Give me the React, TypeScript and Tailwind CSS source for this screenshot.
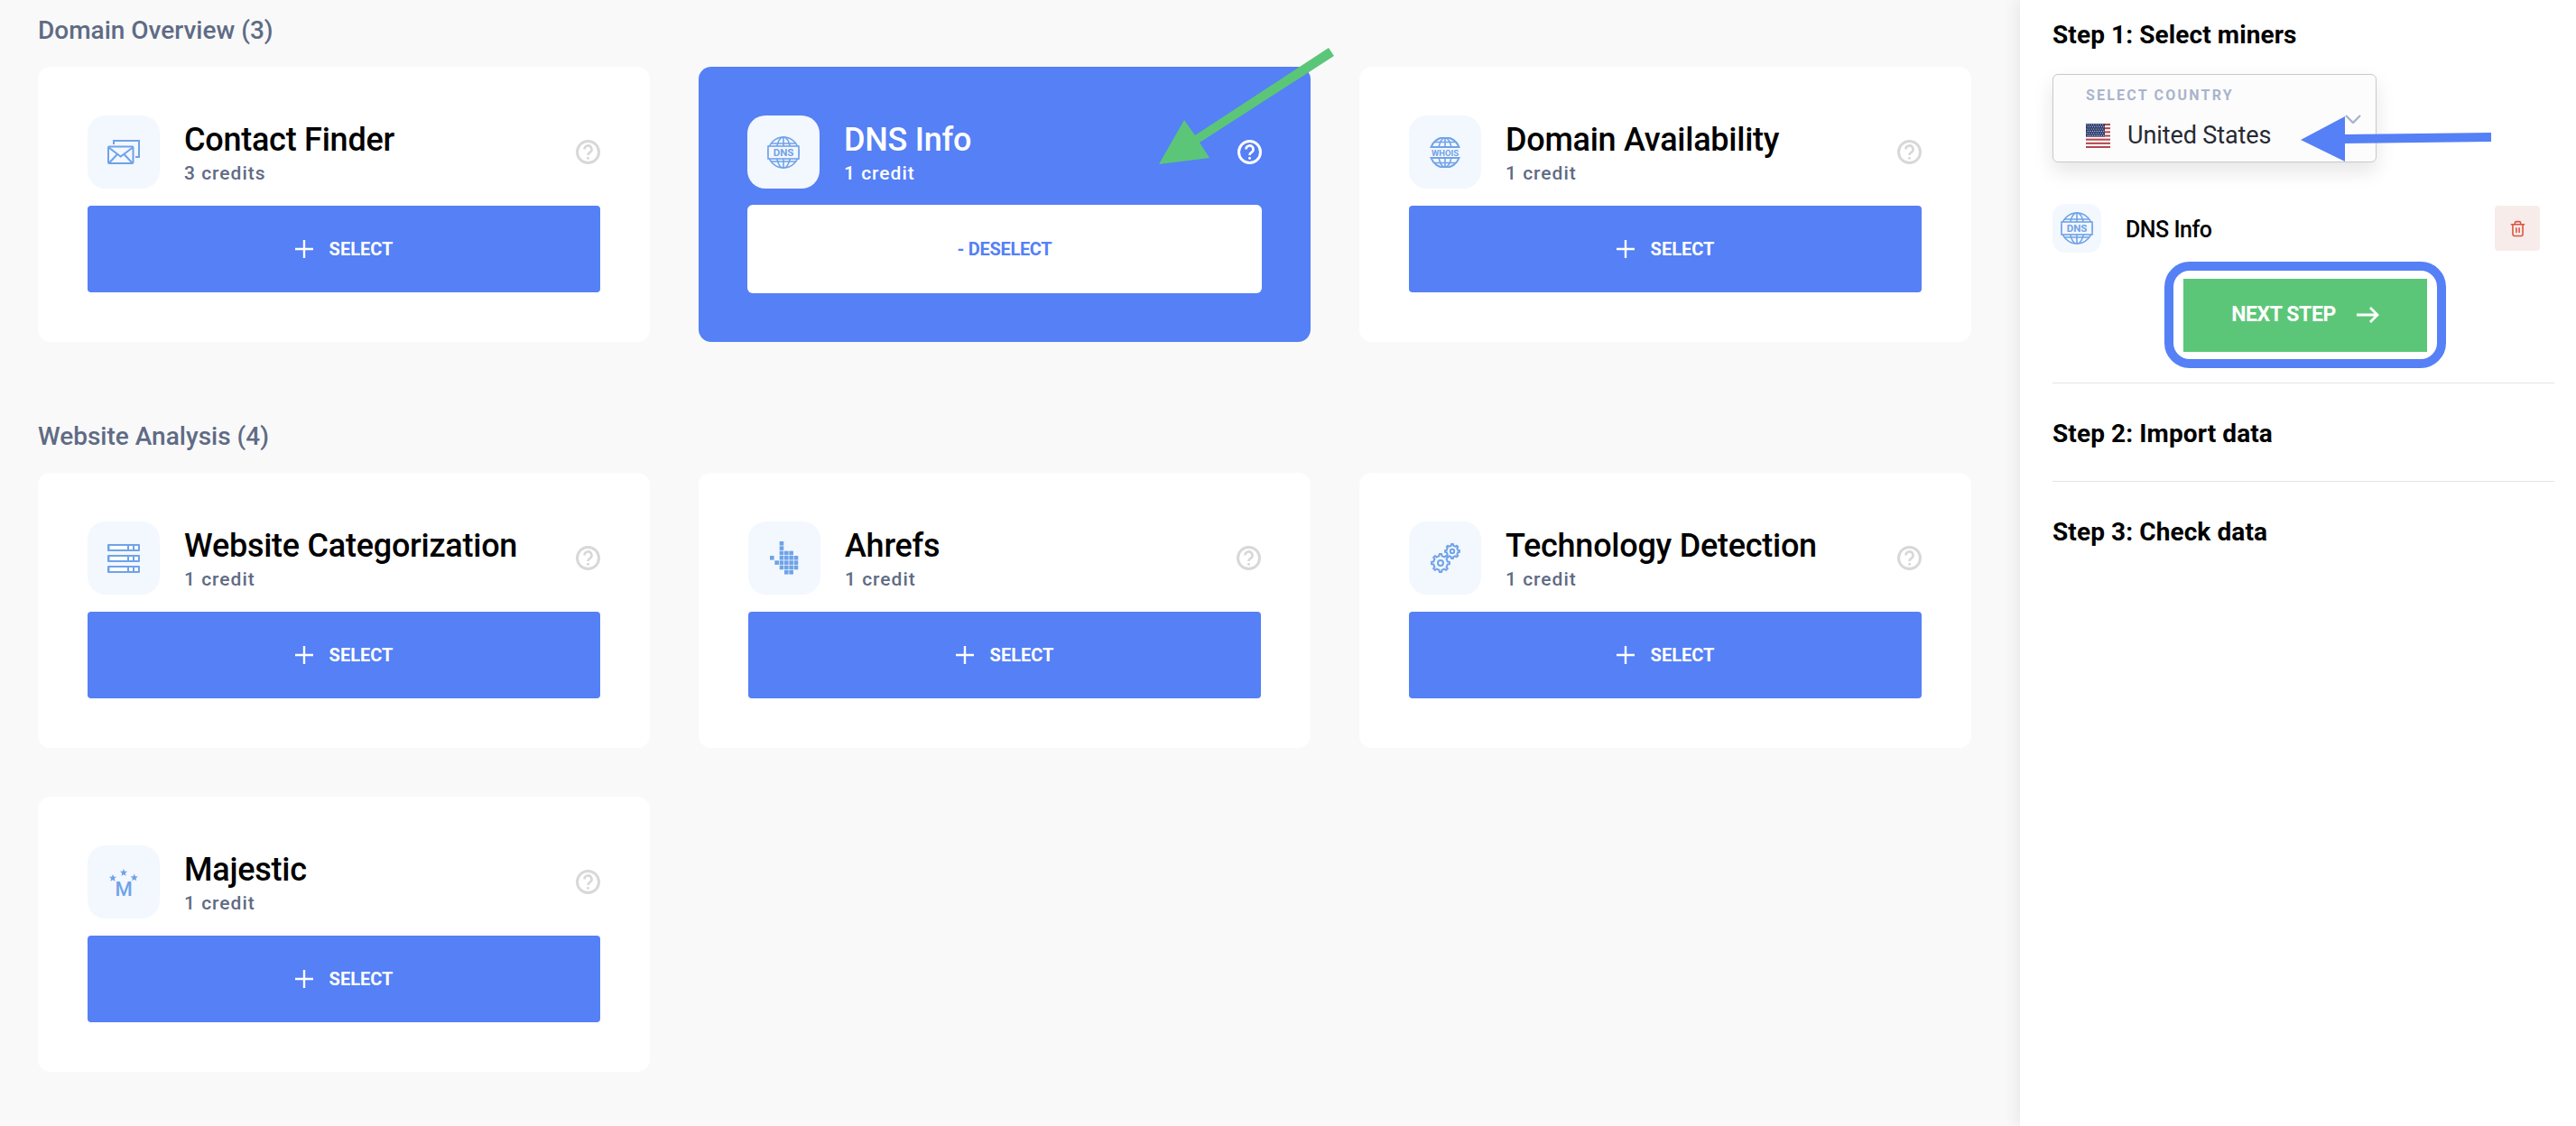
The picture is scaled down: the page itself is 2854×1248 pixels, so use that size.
import type { ReactNode } from 'react'
import { Trash2 } from 'lucide-react'

const ICON = '#6fa3e8'

function gearPath(cx: number, cy: number, r: number, teeth: number) {
  const pts: string[] = []
  const step = (Math.PI * 2) / teeth
  for (let i = 0; i < teeth; i++) {
    const a = i * step
    const list: [number, number][] = [
      [r * 0.78, a - step * 0.5],
      [r * 0.78, a - step * 0.26],
      [r, a - step * 0.16],
      [r, a + step * 0.16],
      [r * 0.78, a + step * 0.26],
    ]
    list.forEach(([rad, ang]) => {
      pts.push(`${(cx + rad * Math.cos(ang)).toFixed(2)},${(cy + rad * Math.sin(ang)).toFixed(2)}`)
    })
  }
  return `M${pts.join('L')}Z`
}

function starPoints(cx: number, cy: number, r: number) {
  const pts: string[] = []
  for (let i = 0; i < 10; i++) {
    const a = -Math.PI / 2 + (i * Math.PI) / 5
    const rad = i % 2 === 0 ? r : r * 0.45
    pts.push(`${(cx + rad * Math.cos(a)).toFixed(2)},${(cy + rad * Math.sin(a)).toFixed(2)}`)
  }
  return pts.join(' ')
}

function MailIcon() {
  return (
    <svg width="36" height="27" viewBox="0 0 36 27" fill="none" stroke={ICON} strokeWidth="2">
      <path d="M7 5V1h28v18h-4" />
      <rect x="1" y="7.5" width="27.5" height="18.5" rx="1" />
      <path d="M1.5 8.5l13.2 10 13.3-10M2 25.5l9-9.5M27.5 25.5l-9-9.5" />
    </svg>
  )
}

function DnsGlobe() {
  return (
    <svg width="36" height="36" viewBox="0 0 36 36" fill="none" stroke={ICON} strokeWidth="1.6">
      <circle cx="18" cy="18" r="17" />
      <ellipse cx="18" cy="18" rx="8" ry="17" />
      <path d="M18 1v34M4 8h28M4 28h28" />
      <rect x="1" y="11" width="34" height="14" fill="#f3f7fe" />
      <text x="18" y="22.2" textAnchor="middle" fontSize="11.5" fontWeight="700" fontFamily="Roboto, sans-serif" fill={ICON} stroke="none">DNS</text>
    </svg>
  )
}

function WhoisGlobe() {
  return (
    <svg width="34" height="34" viewBox="0 0 34 34" fill="none" stroke={ICON} strokeWidth="2">
      <path d="M1.5 11A16.5 16.5 0 0 1 32.5 11H1.5ZM1.5 23A16.5 16.5 0 0 0 32.5 23H1.5Z" />
      <ellipse cx="17" cy="17" rx="7.5" ry="16" strokeWidth="1.6" />
      <path d="M17 1v32M5 5.500h24M5 28.500h24" strokeWidth="1.6" />
      <rect x="0" y="12" width="34" height="10" fill="#f3f7fe" stroke="none" />
      <text x="17" y="21" textAnchor="middle" fontSize="9.500" fontWeight="700" fontFamily="Roboto, sans-serif" fill={ICON} stroke="none">WHOIS</text>
    </svg>
  )
}

function ServerIcon() {
  return (
    <svg width="36" height="32" viewBox="0 0 36 32" fill={ICON}>
      {[0, 12, 24].map((y) => (
        <g key={y}>
          <rect x="0" y={y} width="36" height="8" rx="1" />
          <rect x="2.500" y={y + 2} width="19.500" height="4" fill="#fff" />
          <rect x="24" y={y + 2} width="4" height="4" fill="#fff" />
          <rect x="30" y={y + 2} width="4" height="4" fill="#fff" />
        </g>
      ))}
    </svg>
  )
}

function AhrefsIcon() {
  const cells: [number, number][] = [
    [2, 0], [2, 1], [2, 2], [3, 2], [4, 2],
    [0, 3], [2, 3], [3, 3], [4, 3], [5, 3],
    [1, 4], [2, 4], [3, 4], [4, 4], [5, 4],
    [2, 5], [3, 5], [4, 5], [5, 5], [3, 6], [4, 6],
  ]
  return (
    <svg width="32" height="38" viewBox="0 0 32 38" fill={ICON}>
      {cells.map(([c, r]) => (
        <rect key={`${c}-${r}`} x={c * 5.33} y={r * 5.33} width="4.600" height="4.600" />
      ))}
    </svg>
  )
}

function GearsIcon() {
  return (
    <svg width="33" height="33" viewBox="0 0 33 33" fill="none" stroke={ICON} strokeWidth="2">
      <path d={gearPath(11, 22, 10, 8)} strokeLinejoin="round" />
      <circle cx="11" cy="22" r="3" />
      <path d={gearPath(24, 9, 8, 8)} strokeLinejoin="round" />
      <circle cx="24" cy="9" r="2.200" />
    </svg>
  )
}

function MajesticIcon() {
  return (
    <svg width="36" height="36" viewBox="0 0 36 36" fill={ICON}>
      <polygon points={starPoints(6, 13.2, 4.3)} />
      <polygon points={starPoints(18, 7.2, 4.3)} />
      <polygon points={starPoints(29.7, 12.8, 4.3)} />
      <text x="18" y="32.500" textAnchor="middle" fontSize="22" fontWeight="500" fontFamily="Roboto, sans-serif">M</text>
    </svg>
  )
}

function HelpIcon({ color }: { color: string }) {
  return (
    <svg width="27" height="27" viewBox="0 0 27 27" fill="none" stroke={color} strokeWidth="3" className="shrink-0">
      <circle cx="13.500" cy="13.500" r="12" />
      <path d="M9.500 10.500a4 4 0 1 1 6 3.400c-1.400.8-2 1.500-2 3.100" strokeWidth="2.600" />
      <circle cx="13.500" cy="20.300" r="1.500" fill={color} stroke="none" />
    </svg>
  )
}

function UsFlag() {
  const stripes = [0, 1, 2, 3, 4, 5, 6]
  const dots: [number, number][] = []
  for (let r = 0; r < 6; r++) {
    for (let c = 0; c < 8; c++) dots.push([1.2 + c * 2.5 + (r % 2) * 1.1, 1.2 + r * 2.4])
  }
  return (
    <svg width="27" height="27" viewBox="0 0 27 27" className="shrink-0">
      <rect width="27" height="27" fill="#fff" />
      {stripes.map((i) => (
        <rect key={i} x="0" y={i * 4.16} width="27" height="2.080" fill="#b5474f" />
      ))}
      <rect width="21" height="14.500" fill="#2c3a6b" />
      {dots.map(([x, y]) => (
        <circle key={`${x}-${y}`} cx={x} cy={y} r="0.600" fill="#e8ecf5" />
      ))}
    </svg>
  )
}

type Miner = { name: string; credits: string; icon: ReactNode; selected?: boolean }

const domainMiners: Miner[] = [
  { name: 'Contact Finder', credits: '3 credits', icon: <MailIcon /> },
  { name: 'DNS Info', credits: '1 credit', icon: <DnsGlobe />, selected: true },
  { name: 'Domain Availability', credits: '1 credit', icon: <WhoisGlobe /> },
]

const websiteMiners: Miner[] = [
  { name: 'Website Categorization', credits: '1 credit', icon: <ServerIcon /> },
  { name: 'Ahrefs', credits: '1 credit', icon: <AhrefsIcon /> },
  { name: 'Technology Detection', credits: '1 credit', icon: <GearsIcon /> },
  { name: 'Majestic', credits: '1 credit', icon: <MajesticIcon /> },
]

function MinerCard({ miner }: { miner: Miner }) {
  const { selected } = miner
  return (
    <div className={`h-[305px] rounded-[14px] pt-[54px] ${selected ? 'bg-[#5580f6] px-[54px]' : 'bg-white px-[55px]'}`}>
      <div className="flex h-[81px] items-center">
        <div className="flex h-[81px] w-[80px] shrink-0 items-center justify-center rounded-[20px] bg-[#f3f7fe]">
          {miner.icon}
        </div>
        <div className="ml-[27px] flex-1">
          <div className={`mt-[3px] text-[36px] leading-[36px] font-medium tracking-[-0.25px] ${selected ? 'text-white' : 'text-black'}`}>
            {miner.name}
          </div>
          <div className={`mt-[7px] text-[21px] leading-[24px] font-medium tracking-[1px] ${selected ? 'text-white' : 'text-[#5f6b85]'}`}>
            {miner.credits}
          </div>
        </div>
        <HelpIcon color={selected ? '#ffffff' : '#d8d8d8'} />
      </div>
      {selected ? (
        <button className="mt-[18px] flex h-[98px] w-full items-center justify-center rounded-[6px] bg-white text-[20px] font-bold tracking-[-0.3px] text-[#5580f6]">
          - DESELECT
        </button>
      ) : (
        <button className="mt-[19px] flex h-[96px] w-full items-center justify-center rounded-[4px] bg-[#5580f6] text-[20px] font-bold text-white">
          <svg width="20" height="20" viewBox="0 0 20 20" stroke="#fff" strokeWidth="2.400" className="mr-[18px]">
            <path d="M10 0v20M0 10h20" />
          </svg>
          SELECT
        </button>
      )}
    </div>
  )
}

function StepTitle({ children }: { children: ReactNode }) {
  return <div className="text-[28px] leading-[36px] font-bold tracking-[0.1px] text-black">{children}</div>
}

export default function App() {
  return (
    <div className="relative flex h-[1248px] w-[2854px] overflow-hidden bg-[#f9f9f9] font-['Roboto',sans-serif]">
      {/* Miners */}
      <main className="flex-1 pt-[18px] pl-[42px]">
        <h2 className="mb-[24px] text-[28px] leading-[32px] font-medium text-[#5f6b85]">Domain Overview (3)</h2>
        <div className="grid w-[2142px] grid-cols-3 gap-[54px]">
          {domainMiners.map((m) => (
            <MinerCard key={m.name} miner={m} />
          ))}
        </div>
        <h2 className="mt-[89px] mb-[24px] text-[28px] leading-[32px] font-medium text-[#5f6b85]">Website Analysis (4)</h2>
        <div className="grid w-[2142px] grid-cols-3 gap-[54px]">
          {websiteMiners.map((m) => (
            <MinerCard key={m.name} miner={m} />
          ))}
        </div>
      </main>

      {/* Steps sidebar */}
      <aside className="w-[616px] shrink-0 bg-white pt-[21px] pr-[24px] pl-[36px] shadow-[-6px_0_14px_rgba(0,0,0,0.06)]">
        <StepTitle>Step 1: Select miners</StepTitle>

        <div className="mt-[25px] h-[98px] w-[359px] rounded-[6px] border border-[#c9c9c9] bg-[#fcfcfc] pt-[13px] pl-[36px] shadow-[0_10px_22px_rgba(0,0,0,0.1)]">
          <div className="text-[16px] leading-[20px] font-bold tracking-[2.2px] text-[#a9b4cc]">SELECT COUNTRY</div>
          <div className="mt-[18px] flex items-center">
            <UsFlag />
            <span className="ml-[19px] text-[27px] leading-[32px] tracking-[-0.1px] text-[#272a33]">United States</span>
            <svg width="18" height="10" viewBox="0 0 18 10" fill="none" stroke="#a9b4cc" strokeWidth="2.400" className="mt-[-37px] ml-[82px]">
              <path d="M1 1l8 8 8-8" />
            </svg>
          </div>
        </div>

        <div className="mt-[46px] flex h-[54px] items-center pr-[16px]">
          <div className="flex h-[54px] w-[54px] items-center justify-center rounded-[14px] bg-[#f3f7fe]">
            <DnsGlobe />
          </div>
          <span className="ml-[27px] flex-1 pt-[3px] text-[25px] font-medium tracking-[-0.5px] text-black">DNS Info</span>
          <button className="flex h-[50px] w-[50px] items-center justify-center rounded-[4px] bg-[#f7ecea]">
            <Trash2 size={19} color="#d9553f" strokeWidth={2} />
          </button>
        </div>

        <div className="mt-[10px] ml-[124px] flex h-[118px] w-[312px] items-center justify-center rounded-[28px] border-[10px] border-[#5580f6] bg-white">
          <button className="flex h-[81px] w-[270px] items-center justify-center bg-[#5cc678] text-[23px] font-bold tracking-[-0.4px] text-white">
            NEXT STEP
            <svg width="26" height="20" viewBox="0 0 26 20" fill="none" stroke="#fff" strokeWidth="2.800" className="ml-[22px]">
              <path d="M1 10h23M16 2l8 8-8 8" />
            </svg>
          </button>
        </div>

        <div className="mt-[16px] border-t border-[#e4e4e4] pt-[38px] pb-[34px]">
          <StepTitle>Step 2: Import data</StepTitle>
        </div>
        <div className="border-t border-[#e4e4e4] pt-[38px]">
          <StepTitle>Step 3: Check data</StepTitle>
        </div>
      </aside>

      {/* Annotation arrows */}
      <svg className="pointer-events-none absolute inset-0 h-full w-full" viewBox="0 0 2854 1248">
        <polygon points="1472,53 1478,62 1329,158 1340,175 1284,182 1312,133 1324,150" fill="#5cc678" />
        <polygon points="2760,147 2760,157 2598,159 2598,179 2549,155 2598,129 2598,149" fill="#5580f6" />
      </svg>
    </div>
  )
}
